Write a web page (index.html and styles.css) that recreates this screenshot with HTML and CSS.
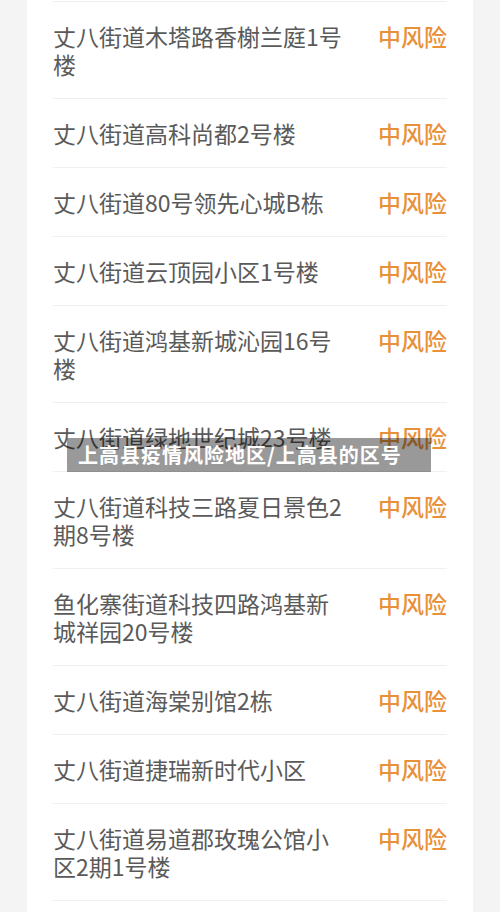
FILE: index.html
```html
<!DOCTYPE html>
<html lang="zh-CN">
<head>
    <meta charset="UTF-8">
    <meta name="viewport" content="width=device-width, initial-scale=1.0">
    <title>上高县疫情风险地区</title>
    <link rel="stylesheet" href="styles.css">
</head>
<body>
<div class="card">
    <div class="row"><div class="place">丈八街道木塔路香榭兰庭1号楼</div><div class="level">中风险</div></div>
    <div class="row"><div class="place">丈八街道高科尚都2号楼</div><div class="level">中风险</div></div>
    <div class="row"><div class="place">丈八街道80号领先心城B栋</div><div class="level">中风险</div></div>
    <div class="row"><div class="place">丈八街道云顶园小区1号楼</div><div class="level">中风险</div></div>
    <div class="row"><div class="place">丈八街道鸿基新城沁园16号楼</div><div class="level">中风险</div></div>
    <div class="row"><div class="place">丈八街道绿地世纪城23号楼</div><div class="level">中风险</div></div>
    <div class="row"><div class="place">丈八街道科技三路夏日景色2期8号楼</div><div class="level">中风险</div></div>
    <div class="row"><div class="place">鱼化寨街道科技四路鸿基新城祥园20号楼</div><div class="level">中风险</div></div>
    <div class="row"><div class="place">丈八街道海棠别馆2栋</div><div class="level">中风险</div></div>
    <div class="row"><div class="place">丈八街道捷瑞新时代小区</div><div class="level">中风险</div></div>
    <div class="row"><div class="place">丈八街道易道郡玫瑰公馆小区2期1号楼</div><div class="level">中风险</div></div>
</div>
<div class="caption">上高县疫情风险地区/上高县的区号</div>
</body>
</html>
```

FILE: styles.css
```css
body {
    margin: 0;
    background-color: #f4f4f4;
    font-family: "Noto Sans CJK SC", "Noto Sans", sans-serif;
    overflow: hidden;
}

.card {
    margin: 0 27px;
    padding: 1px 26px 40px 26px;
    background-color: #ffffff;
}

.row {
    display: flex;
    justify-content: space-between;
    align-items: flex-start;
    padding: 20px 0;
    border-top: 1px solid #f0f0f0;
}

.row:last-child {
    border-bottom: 1px solid #f0f0f0;
}

.place {
    width: 292px;
    font-size: 23px;
    line-height: 28px;
    color: #5a5a5a;
}

.level {
    font-size: 23px;
    line-height: 28px;
    font-weight: 500;
    color: #e8913a;
    white-space: nowrap;
}

/* overlay title on top of the list */
.caption {
    position: absolute;
    top: 438px;
    left: 67px;
    width: 353px;
    height: 34px;
    padding-left: 11px;
    background-color: rgba(0, 0, 0, 0.4);
    color: #ffffff;
    font-size: 20px;
    font-weight: 700;
    line-height: 34px;
    letter-spacing: 1px;
}
```
